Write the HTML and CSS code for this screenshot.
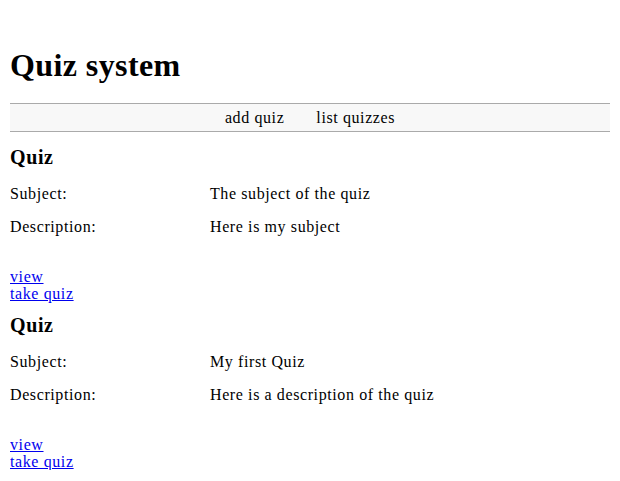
FILE: index.html
```html
<!DOCTYPE html>
<html>
<head>
<meta charset="utf-8">
<title>Quiz system</title>
<link rel="stylesheet" href="styles.css">
</head>
<body>
<h1 class="title">Quiz system</h1>
<nav class="menu">
  <span class="menu-item">add quiz</span>
  <span class="menu-item">list quizzes</span>
</nav>
<div class="quiz">
  <h2 class="quiz-title">Quiz</h2>
  <div class="fields">
    <div class="label">Subject:</div><div class="value">The subject of the quiz</div>
    <div class="label">Description:</div><div class="value">Here is my subject</div>
  </div>
  <div class="links">
    <a href="#">view</a><br>
    <a href="#">take quiz</a>
  </div>
</div>
<div class="quiz">
  <h2 class="quiz-title">Quiz</h2>
  <div class="fields">
    <div class="label">Subject:</div><div class="value">My first Quiz</div>
    <div class="label">Description:</div><div class="value">Here is a description of the quiz</div>
  </div>
  <div class="links">
    <a href="#">view</a><br>
    <a href="#">take quiz</a>
  </div>
</div>
</body>
</html>
```

FILE: styles.css
```css
body {
  margin: 10px;
  font-family: "Liberation Serif", "Times New Roman", serif;
  font-size: 16px;
  letter-spacing: 0.6px;
  color: #000;
  background: #fff;
}
.title {
  font-size: 32px;
  font-weight: bold;
  letter-spacing: 0.4px;
  margin: 35px 0 18px;
  line-height: 40px;
}
.menu {
  display: flex;
  justify-content: center;
  gap: 32px;
  background: #f8f8f8;
  border-top: 1px solid #aaa;
  border-bottom: 1px solid #aaa;
  height: 27px;
  align-items: center;
  margin-bottom: 13px;
}
.quiz-title {
  font-size: 20px;
  margin: 11px 0 8px;
  line-height: 24px;
}
.fields {
  display: grid;
  grid-template-columns: 200px 1fr;
  grid-auto-rows: 33px;
  align-items: center;
}
.links {
  margin-top: 25px;
  line-height: 17px;
}
.links a {
  color: #00e;
}
```
